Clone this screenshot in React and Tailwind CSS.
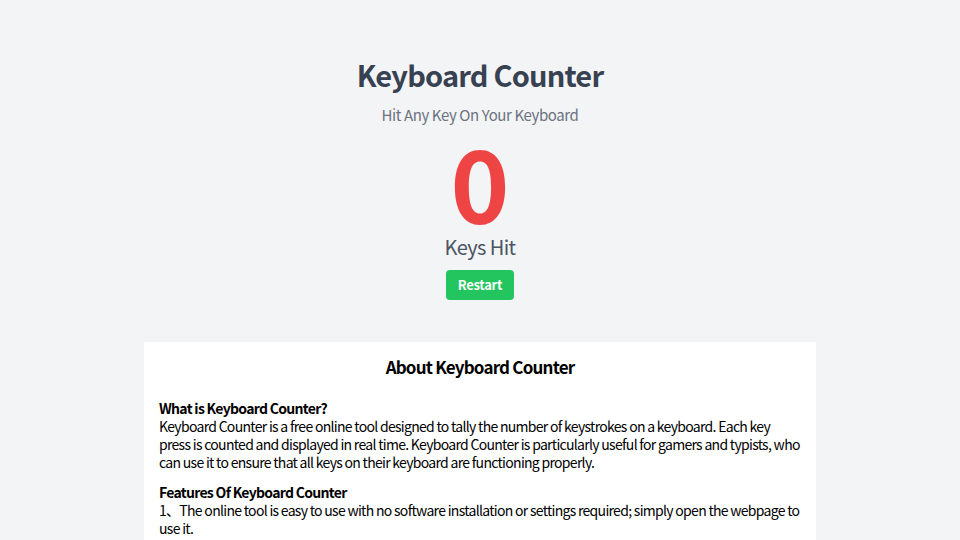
const App = () => {
  return (
    <div
      className="bg-[#f3f4f6] min-h-screen flex flex-col items-center text-[#374151]"
      style={{ fontFamily: '"Noto Sans CJK SC", "Noto Sans", sans-serif' }}
    >
      <header className="flex flex-col items-center pt-[51px]">
        <h1 className="text-[29px] leading-[46px] font-bold tracking-[-0.8px] text-[#374151]">Keyboard Counter</h1>
        <p className="mt-[8px] text-[15px] leading-[20px] tracking-[-0.4px] text-[#6b7280]">Hit Any Key On Your Keyboard</p>
        <div className="mt-[4px] text-[100px] leading-[104px] font-bold text-[#ef4444]">0</div>
        <p className="text-[20px] leading-[28px] tracking-[-0.6px] text-[#4b5563]">Keys Hit</p>
        <button
          type="button"
          className="mt-[9px] bg-[#22c55e] text-white text-[13px] font-bold tracking-[-0.3px] rounded px-[12px] h-[30px]"
        >
          Restart
        </button>
      </header>

      <main className="mt-[42px] w-[672px] bg-white px-[15px] pt-[13px] pb-6 text-black">
        <h2 className="text-center text-[17px] leading-[24px] font-bold tracking-[-0.8px]">About Keyboard Counter</h2>

        <section className="mt-[20px] text-[14px] leading-[18px]">
          <h3 className="font-bold tracking-[-0.7px]">What is Keyboard Counter?</h3>
          <p className="tracking-[-0.7px]">
            Keyboard Counter is a free online tool designed to tally the number of keystrokes on a keyboard. Each key
            press is counted and displayed in real time. Keyboard Counter is particularly useful for gamers and typists, who
            can use it to ensure that all keys on their keyboard are functioning properly.
          </p>
        </section>

        <section className="mt-[12px] text-[14px] leading-[18px]">
          <h3 className="font-bold tracking-[-0.7px]">Features Of Keyboard Counter</h3>
          <p className="tracking-[-0.7px]">
            1、The online tool is easy to use with no software installation or settings required; simply open the webpage to
            use it.
          </p>
        </section>
      </main>
    </div>
  );
};

export default App;
